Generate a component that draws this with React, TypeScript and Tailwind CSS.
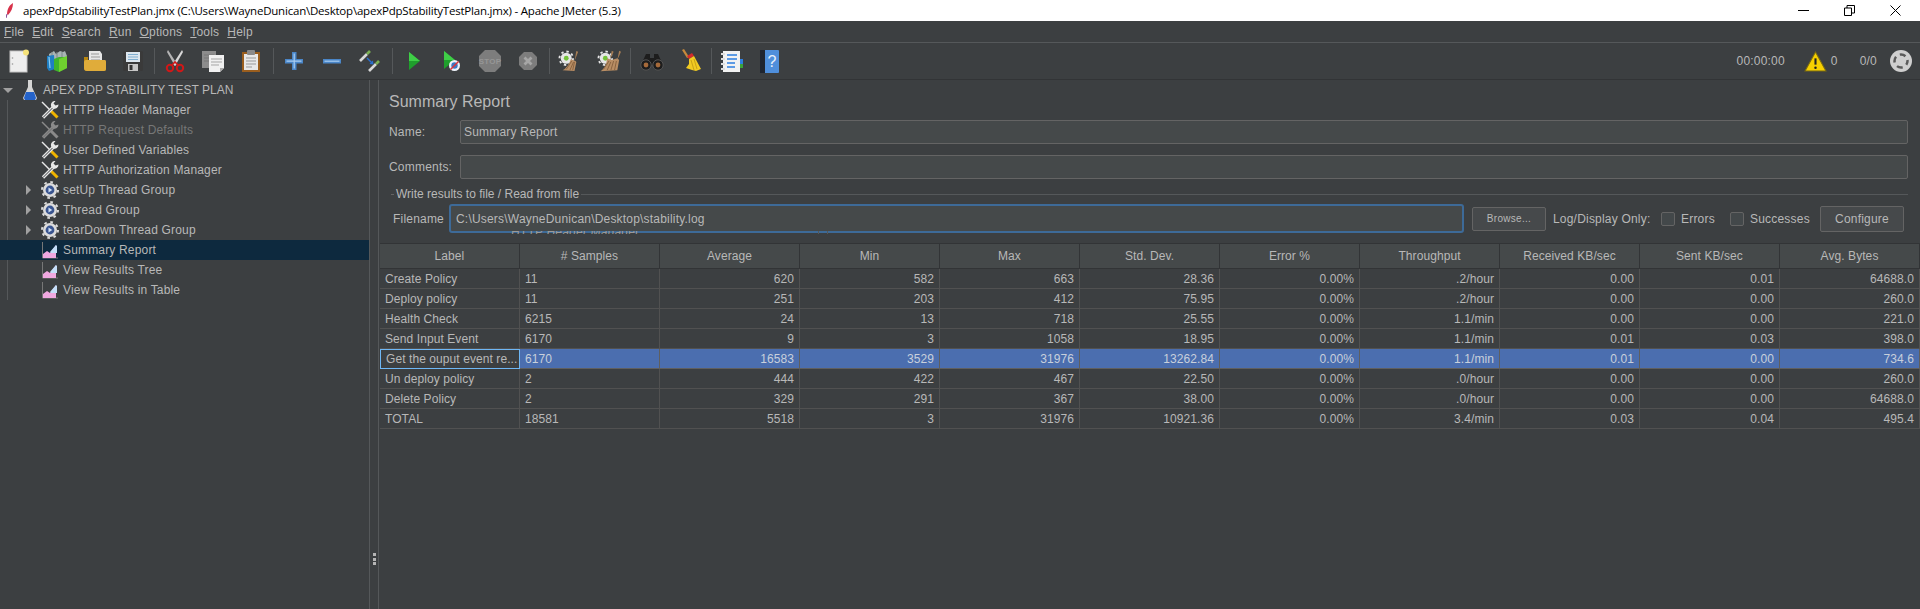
import React from 'react'

type IconProps = { className?: string }

/* toolbar icons, all drawn on a 24x24 box */
const NewIcon = () => (
  <svg width="24" height="24" viewBox="0 0 24 24">
    <rect x="3" y="2" width="17" height="21" fill="#eeeeee" stroke="#c4c4c4" />
    <circle cx="5.5" cy="9" r="0.8" fill="#999" />
    <circle cx="5.5" cy="15" r="0.8" fill="#999" />
    <circle cx="19" cy="3.5" r="3" fill="#f5e27a" />
  </svg>
)
const TemplatesIcon = () => (
  <svg width="24" height="24" viewBox="0 0 24 24">
    <path d="M4 5l5-3 2 3 4-3 3 1 2-1 2 5v6H4z" fill="#a9b4b5" />
    <path d="M7 3v6M12 3v6M17 3v6" stroke="#7a8788" />
    <path d="M2 7l7-1 1 14-6 2-2-3z" fill="#1f7fc4" />
    <path d="M4 8l1 11" stroke="#8fd0f5" strokeWidth="1.2" />
    <path d="M9 10l5-2 8 0v11l-8 4-5-2z" fill="#3eb52c" />
    <path d="M14 10l8-3v12l-8 4z" fill="#6fd12f" />
  </svg>
)
const OpenIcon = () => (
  <svg width="24" height="24" viewBox="0 0 24 24">
    <path d="M6 2h11l2 3v8H6z" fill="#e6e6e6" />
    <path d="M8 5h8M8 8h9M8 11h9" stroke="#999" />
    <path d="M1 8h4v4h18v8a2 2 0 0 1-2 2H4a3 3 0 0 1-3-3z" fill="#b8860f" />
    <path d="M1 13q0-2 2-2h19q1 0 1 2v7a2 2 0 0 1-2 2H4a3 3 0 0 1-3-3z" fill="#e0ac3a" />
  </svg>
)
const SaveIcon = () => (
  <svg width="24" height="24" viewBox="0 0 24 24">
    <rect x="2" y="2" width="20" height="20" rx="1.5" fill="#3a3a3a" />
    <rect x="5" y="3" width="14" height="10" fill="#dce6ee" />
    <path d="M7 5.5h10M7 8h10M7 10.5h10" stroke="#7faed0" />
    <rect x="7" y="15" width="10" height="7" fill="#c7c7c7" />
    <rect x="8.5" y="16" width="3" height="5" fill="#333" />
  </svg>
)
const CutIcon = () => (
  <svg width="24" height="24" viewBox="0 0 24 24">
    <path d="M5 1l9 14-2 2L4 3z" fill="#b5b5b5" />
    <path d="M19 1l-9 14 2 2 8-14z" fill="#d8d8d8" />
    <circle cx="7" cy="19" r="3.2" fill="none" stroke="#d01818" strokeWidth="2" />
    <circle cx="17" cy="19" r="3.2" fill="none" stroke="#d01818" strokeWidth="2" />
    <path d="M9 16l3-3 3 3" fill="none" stroke="#d01818" strokeWidth="1.6" />
  </svg>
)
const CopyIcon = () => (
  <svg width="24" height="24" viewBox="0 0 24 24">
    <rect x="1" y="2" width="14" height="17" fill="#8c8c8c" />
    <path d="M3 6h10M3 9h10M3 12h10" stroke="#777" />
    <path d="M8 6h15v13l-4 4H8z" fill="#f0f0f0" />
    <path d="M19 23v-4h4z" fill="#aaa" />
    <path d="M10 10h11M10 13h11M10 16h8" stroke="#a5a5a5" />
  </svg>
)
const PasteIcon = () => (
  <svg width="24" height="24" viewBox="0 0 24 24">
    <rect x="3" y="3" width="18" height="20" fill="#9a5e1e" />
    <rect x="5" y="5" width="14" height="16" fill="#e8e8e8" />
    <rect x="8" y="1" width="8" height="5" rx="1" fill="#8a8a8a" />
    <path d="M7 9h10M7 12h10M7 15h10M7 18h6" stroke="#999" />
  </svg>
)
const PlusIcon = () => (
  <svg width="24" height="24" viewBox="0 0 24 24">
    <rect x="10" y="3" width="4.5" height="18" fill="#4a86c8" />
    <rect x="3" y="10" width="18" height="4.5" fill="#4a86c8" />
    <path d="M12.200 4.500v15M4.500 12.200h15" stroke="#a9cdf0" strokeWidth="1.2" />
  </svg>
)
const MinusIcon = () => (
  <svg width="24" height="24" viewBox="0 0 24 24">
    <rect x="3" y="10" width="18" height="4.5" fill="#4a86c8" />
    <path d="M4.500 12.200h15" stroke="#a9cdf0" strokeWidth="1.2" />
  </svg>
)
const ToggleIcon = () => (
  <svg width="24" height="24" viewBox="0 0 24 24">
    <path d="M2 12l7-7" stroke="#d8d8d8" strokeWidth="2.6" />
    <path d="M9 5l3-3" stroke="#7bb054" strokeWidth="2.6" />
    <path d="M11 22l7-7" stroke="#d8d8d8" strokeWidth="2.6" />
    <path d="M18 15l3-3" stroke="#7bb054" strokeWidth="2.6" />
    <path d="M9 9l5 5" stroke="#2a6fd0" strokeWidth="1.4" />
    <path d="M15.500 15.500l-4-.6 3.400-3.400z" fill="#2a6fd0" />
  </svg>
)
const StartIcon = () => (
  <svg width="24" height="24" viewBox="0 0 24 24">
    <path d="M7 3l11 9-11 9z" fill="#1f9e2c" />
    <path d="M7 3l11 9H7z" fill="#3fce47" />
  </svg>
)
const StartNoPauseIcon = () => (
  <svg width="24" height="24" viewBox="0 0 24 24">
    <path d="M4 2l11 9-11 9z" fill="#1f9e2c" />
    <path d="M4 2l11 9H4z" fill="#3fce47" />
    <circle cx="14.500" cy="16.500" r="5.500" fill="#eef3fa" />
    <circle cx="14.500" cy="16.500" r="3.200" fill="#3b78c4" />
    <path d="M10.500 20.500l8-8" stroke="#d8353b" strokeWidth="1.6" />
  </svg>
)
const StopIcon = () => (
  <svg width="24" height="24" viewBox="0 0 24 24">
    <path d="M7 1h10l6 6v10l-6 6H7l-6-6V7z" fill="#7d7d7d" />
    <text x="12" y="15" textAnchor="middle" fontSize="8" fontWeight="700" fill="#969696" fontFamily="Liberation Sans, sans-serif">STOP</text>
  </svg>
)
const ShutdownIcon = () => (
  <svg width="24" height="24" viewBox="0 0 24 24">
    <path d="M8 3h8l5 5v8l-5 5H8l-5-5V8z" fill="#7d7d7d" />
    <path d="M8.500 8.500l7 7M15.500 8.500l-7 7" stroke="#a6a6a6" strokeWidth="2.8" />
  </svg>
)
const Gear = ({ center = '#74c23a' }: { center?: string }) => (
  <g>
    <circle cx="9" cy="9" r="6" fill="#e6e6e6" />
    <circle cx="9" cy="9" r="7.400" fill="none" stroke="#e6e6e6" strokeWidth="2" strokeDasharray="2.6 3.2" />
    <circle cx="9" cy="9" r="2.600" fill={center} />
  </g>
)
const ClearIcon = () => (
  <svg width="22" height="24" viewBox="0 0 24 24">
    <Gear />
    <path d="M20 1l2 1-4 10z" fill="#a77e55" />
    <path d="M14 10l5 2 1 1-2 10-13-1q6-3 9-12z" fill="#b88d64" />
    <path d="M9 21l6-9M13 22l4-9M16 22l2-9" stroke="#85603d" />
  </svg>
)
const ClearAllIcon = () => (
  <svg className="ml-[3px]" width="24" height="24" viewBox="0 0 26 24">
    <Gear />
    <path d="M16 1l2 1-4 9zM24 1l2 1-4 9z" fill="#a77e55" />
    <path d="M11 9l5 2 6-2 2 2-2 11-18 1q6-4 7-14z" fill="#b88d64" />
    <path d="M7 21l6-9M11 22l4-9M15 22l3-10M19 22l2-10" stroke="#85603d" />
  </svg>
)
const SearchIcon = () => (
  <svg width="24" height="24" viewBox="0 0 24 24">
    <path d="M6 5h4v4h4V5h4l5 11H1z" fill="#1d1d1d" />
    <circle cx="6" cy="16" r="5.200" fill="#1d1d1d" stroke="#555" />
    <circle cx="18" cy="16" r="5.200" fill="#1d1d1d" stroke="#555" />
    <circle cx="6" cy="16" r="2.400" fill="#a66a3a" />
    <circle cx="18" cy="16" r="2.400" fill="#a66a3a" />
  </svg>
)
const BroomIcon = () => (
  <svg width="24" height="24" viewBox="0 0 24 24">
    <path d="M4 1l2-1 5 8-2 1z" fill="#c68a3c" />
    <path d="M9 7l5-3 2 3-5 3z" fill="#d32b2b" />
    <path d="M11 10l5-3 7 13-5 2-4-1-6-2 3-4z" fill="#f1cb22" />
    <path d="M13 11l3 10M16 10l3 10" stroke="#c8a216" />
  </svg>
)
const LogIcon = () => (
  <svg width="24" height="24" viewBox="0 0 24 24">
    <rect x="3" y="2" width="17" height="21" fill="#f2f2f2" />
    <path d="M7 6h10M7 10h10M7 14h8M7 18h8" stroke="#2e7fe0" strokeWidth="1.4" />
    <path d="M1 5h4M1 10h4M1 15h4M1 20h4" stroke="#dddddd" strokeWidth="2" />
    <rect x="20" y="10" width="3" height="5" fill="#2e7fe0" />
    <rect x="20" y="15" width="3" height="4" fill="#3aa23a" />
  </svg>
)
const HelpIcon = () => (
  <svg width="24" height="24" viewBox="0 0 24 24">
    <rect x="3" y="1" width="18" height="23" rx="1" fill="#4f8fdc" />
    <rect x="2" y="1" width="5" height="23" fill="#1f2530" />
    <text x="14" y="18" textAnchor="middle" fontSize="16" fill="#e8f1fb" fontFamily="Liberation Sans, sans-serif">?</text>
  </svg>
)

/* tree icons */
const ToolIcon = ({ disabled = false }: { disabled?: boolean }) => {
  const metal = disabled ? '#8a8a8a' : '#e8e8e8'
  return (
    <svg width="18" height="18" viewBox="0 0 18 18">
      <path d="M1 1l8 8" stroke={metal} strokeWidth="1.4" />
      <path d="M9 9l7.500 7.500" stroke={disabled ? '#8a8a8a' : '#f0b400'} strokeWidth="3" />
      <path d="M2 16.500L13 5.500" stroke={metal} strokeWidth="3.200" />
      <path d="M2 16.500L13 5.500" stroke={disabled ? '#6e6e6e' : '#3c3f41'} strokeWidth="1" />
      <path d="M17.500 3.500a4 4 0 0 1-5.500 4L10.500 6a4 4 0 0 1 4-6l-2 2.500 2 2z" fill={metal} />
    </svg>
  )
}
const ThreadIcon = () => (
  <svg width="18" height="18" viewBox="0 0 18 18">
    <circle cx="9" cy="9" r="7" fill="#dcdcdc" />
    <circle cx="9" cy="9" r="8" fill="none" stroke="#dcdcdc" strokeWidth="2" strokeDasharray="2.6 3.7" />
    <circle cx="9" cy="9" r="4.400" fill="#3a5590" />
    <path d="M7.500 6.400l3.800 2.600-3.800 2.600z" fill="#cfe0f5" />
  </svg>
)
const ListenerIcon = () => (
  <svg width="18" height="18" viewBox="0 0 18 18">
    <path d="M1.500 1v16M1.500 17H17" stroke="#777" />
    <path d="M2 17v-4l4-3 3 2 6-8v13z" fill="#f0a8e0" />
    <path d="M9 11l6-7 1 1v7H10z" fill="#c4def8" />
  </svg>
)
const FlaskIcon = () => (
  <svg width="14" height="20" viewBox="0 0 14 20">
    <path d="M5 0h4v7l5 11-1 2H1l-1-2 5-11z" fill="#d5d5d5" />
    <path d="M3 12h8l2 6-1 2H2l-1-2z" fill="#2563c9" />
  </svg>
)

const ChevronDown = () => <span className="w-0 h-0 border-l-[5px] border-r-[5px] border-t-[5px] border-l-transparent border-r-transparent border-t-[#a0a0a0]" />
const ChevronRight = () => <span className="w-0 h-0 border-t-[5px] border-b-[5px] border-l-[5px] border-t-transparent border-b-transparent border-l-[#a0a0a0]" />

const Sep = ({ className = '' }: IconProps) => <span className={`w-px h-[26px] bg-[#55585a] ${className}`} />

const ToolBtn = ({ children }: { children: React.ReactNode }) => (
  <span className="w-[38px] h-full flex items-center justify-center">{children}</span>
)

const menus = [
  ['F', 'ile'],
  ['E', 'dit'],
  ['S', 'earch'],
  ['R', 'un'],
  ['O', 'ptions'],
  ['T', 'ools'],
  ['H', 'elp'],
]

const treeItems: { label: string; kind: 'tool' | 'off' | 'thread' | 'listener'; selected?: boolean }[] = [
  { label: 'HTTP Header Manager', kind: 'tool' },
  { label: 'HTTP Request Defaults', kind: 'off' },
  { label: 'User Defined Variables', kind: 'tool' },
  { label: 'HTTP Authorization Manager', kind: 'tool' },
  { label: 'setUp Thread Group', kind: 'thread' },
  { label: 'Thread Group', kind: 'thread' },
  { label: 'tearDown Thread Group', kind: 'thread' },
  { label: 'Summary Report', kind: 'listener', selected: true },
  { label: 'View Results Tree', kind: 'listener' },
  { label: 'View Results in Table', kind: 'listener' },
]

const columns = ['Label', '# Samples', 'Average', 'Min', 'Max', 'Std. Dev.', 'Error %', 'Throughput', 'Received KB/sec', 'Sent KB/sec', 'Avg. Bytes']

const rows = [
  ['Create Policy', '11', '620', '582', '663', '28.36', '0.00%', '.2/hour', '0.00', '0.01', '64688.0'],
  ['Deploy policy', '11', '251', '203', '412', '75.95', '0.00%', '.2/hour', '0.00', '0.00', '260.0'],
  ['Health Check', '6215', '24', '13', '718', '25.55', '0.00%', '1.1/min', '0.00', '0.00', '221.0'],
  ['Send Input Event', '6170', '9', '3', '1058', '18.95', '0.00%', '1.1/min', '0.01', '0.03', '398.0'],
  ['Get the ouput event re...', '6170', '16583', '3529', '31976', '13262.84', '0.00%', '1.1/min', '0.01', '0.00', '734.6'],
  ['Un deploy policy', '2', '444', '422', '467', '22.50', '0.00%', '.0/hour', '0.00', '0.00', '260.0'],
  ['Delete Policy', '2', '329', '291', '367', '38.00', '0.00%', '.0/hour', '0.00', '0.00', '64688.0'],
  ['TOTAL', '18581', '5518', '3', '31976', '10921.36', '0.00%', '3.4/min', '0.03', '0.04', '495.4'],
]

const App = () => {
  return (
    <div className="w-[1920px] h-[609px] overflow-hidden flex flex-col bg-[#3c3f41] text-[#b8b8b8] text-[12px] tracking-[0.2px] font-['Liberation_Sans',sans-serif]">
      {/* Title bar */}
      <div className="h-[21px] bg-white flex items-center text-black shrink-0">
        <svg className="ml-[6px]" width="8" height="15" viewBox="0 0 8 15">
          <path d="M7 0C3 2 1 7 1 11l1 1C5 9 7 5 7 0z" fill="#d8324a" />
          <path d="M1 11L0 15" stroke="#7a3f8f" />
        </svg>
        <span className="ml-[9px] text-[11.5px] tracking-[-0.21px] font-['Open_Sans',sans-serif]">
          apexPdpStabilityTestPlan.jmx (C:\Users\WayneDunican\Desktop\apexPdpStabilityTestPlan.jmx) - Apache JMeter (5.3)
        </span>
        <div className="ml-auto flex items-center">
          <svg className="mr-[35px]" width="11" height="11" viewBox="0 0 11 11"><path d="M0 5.500h11" stroke="#000" /></svg>
          <svg className="mr-[35px]" width="11" height="11" viewBox="0 0 11 11"><path d="M.5 3h7v7.500h-7zM3 3V.5h7.500V8H7.500" fill="none" stroke="#000" /></svg>
          <svg className="mr-[19px]" width="11" height="11" viewBox="0 0 11 11"><path d="M.5.5l10 10M10.500.5l-10 10" stroke="#000" /></svg>
        </div>
      </div>

      {/* Menu bar */}
      <div className="h-[22px] shrink-0 flex items-center pl-[4px] gap-[8px] border-b border-[#55585a]">
        {menus.map(([key, rest]) => (
          <span key={key}>
            <span className="underline">{key}</span>
            {rest}
          </span>
        ))}
      </div>

      {/* Toolbar */}
      <div className="h-[37px] shrink-0 flex items-center border-b border-[#323436]">
        <ToolBtn><NewIcon /></ToolBtn>
        <ToolBtn><TemplatesIcon /></ToolBtn>
        <ToolBtn><OpenIcon /></ToolBtn>
        <ToolBtn><SaveIcon /></ToolBtn>
        <Sep className="ml-[2px] mr-px" />
        <ToolBtn><CutIcon /></ToolBtn>
        <ToolBtn><CopyIcon /></ToolBtn>
        <ToolBtn><PasteIcon /></ToolBtn>
        <Sep className="ml-[3px] mr-px" />
        <ToolBtn><PlusIcon /></ToolBtn>
        <ToolBtn><MinusIcon /></ToolBtn>
        <ToolBtn><ToggleIcon /></ToolBtn>
        <Sep className="ml-[3px] mr-[2px]" />
        <ToolBtn><StartIcon /></ToolBtn>
        <ToolBtn><StartNoPauseIcon /></ToolBtn>
        <ToolBtn><StopIcon /></ToolBtn>
        <ToolBtn><ShutdownIcon /></ToolBtn>
        <Sep className="ml-[2px]" />
        <ToolBtn><ClearIcon /></ToolBtn>
        <ToolBtn><ClearAllIcon /></ToolBtn>
        <Sep className="ml-[4px] mr-[2px]" />
        <ToolBtn><SearchIcon /></ToolBtn>
        <ToolBtn><BroomIcon /></ToolBtn>
        <Sep className="ml-[2px] mr-px" />
        <ToolBtn><LogIcon /></ToolBtn>
        <ToolBtn><HelpIcon /></ToolBtn>
        <div className="ml-auto flex items-center pr-[8px]">
          <span>00:00:00</span>
          <svg className="ml-[19px]" width="23" height="21" viewBox="0 0 22 20">
            <path d="M11 1l10 18H1z" fill="#f7d000" stroke="#7a6a10" />
            <path d="M11 7v6" stroke="#222" strokeWidth="2" />
            <circle cx="11" cy="16" r="1.200" fill="#222" />
          </svg>
          <span className="ml-[4px]">0</span>
          <span className="ml-[22px]">0/0</span>
          <svg className="ml-[13px]" width="22" height="22" viewBox="0 0 22 22">
            <circle cx="11" cy="11" r="11" fill="#cfcfcf" />
            <circle cx="11" cy="11" r="6.500" fill="none" stroke="#5a5a5a" strokeWidth="2.500" strokeDasharray="6 4.200" strokeDashoffset="2" />
          </svg>
        </div>
      </div>

      <div className="flex-1 flex min-h-0">
        {/* Test plan tree */}
        <div className="relative w-[369px] shrink-0 tracking-[0.17px]">
          <span className="absolute left-[7px] top-[20px] h-[200px] w-px bg-[#55585a]" />
          <div className="h-5 flex items-center relative">
            <span className="absolute left-[3px] top-[8px] flex"><ChevronDown /></span>
            <span className="ml-[23px] flex"><FlaskIcon /></span>
            <span className="ml-[6px] tracking-normal">APEX PDP STABILITY TEST PLAN</span>
          </div>
          {treeItems.map(item => (
            <div key={item.label} className={`h-5 flex items-center relative pl-[41px] ${item.selected ? 'bg-[#0d293e]' : ''}`}>
              {item.kind === 'thread' && <span className="absolute left-[26px] top-[5px] flex"><ChevronRight /></span>}
              <span className="flex">
                {item.kind === 'tool' && <ToolIcon />}
                {item.kind === 'off' && <ToolIcon disabled />}
                {item.kind === 'thread' && <ThreadIcon />}
                {item.kind === 'listener' && <ListenerIcon />}
              </span>
              <span className={`ml-[4px] ${item.kind === 'off' ? 'text-[#777777]' : ''}`}>{item.label}</span>
            </div>
          ))}
        </div>

        {/* Splitter */}
        <div className="w-[10px] shrink-0 border-l border-r border-[#55585a] flex flex-col items-center justify-end gap-[1.5px] pb-[44px]">
          <span className="w-[3px] h-[3px] bg-[#b5b5b5]" />
          <span className="w-[3px] h-[3px] bg-[#b5b5b5]" />
          <span className="w-[3px] h-[3px] bg-[#b5b5b5]" />
        </div>

        {/* Summary report panel */}
        <div className="flex-1 min-w-0 flex flex-col">
          <div className="pl-[10px] pr-[12px]">
            <div className="h-[40px] flex items-center text-[16px] tracking-normal pt-[3px]">Summary Report</div>
            <div className="flex items-center h-[24px]">
              <span className="w-[71px] shrink-0">Name:</span>
              <div className="flex-1 h-full rounded-[2px] border border-[#646464] bg-[#45494a] pl-[3px] flex items-center">Summary Report</div>
            </div>
            <div className="flex items-center h-[24px] mt-[11px]">
              <span className="w-[71px] shrink-0">Comments:</span>
              <div className="flex-1 h-full rounded-[2px] border border-[#646464] bg-[#45494a]" />
            </div>
            <div className="flex items-center h-[16px] mt-[7px] pl-[2px]">
              <span className="w-[3px] h-px bg-[#646464]" />
              <span className="px-[2px] tracking-normal">Write results to file / Read from file</span>
              <span className="flex-1 h-px bg-[#55585a]" />
            </div>
          </div>
          <div className="flex items-center h-[29px] mt-[2px] pl-[14px]">
            <span className="w-[56px] shrink-0">Filename</span>
            <div className="relative w-[1015px] h-full rounded-[3px] border-2 border-[#3d6a98] bg-[#45494a] flex items-center pl-[5px]">
              C:\Users\WayneDunican\Desktop\stability.log
              {/* repaint leftovers from the tree, peeking out under the focused field */}
              <div className="absolute top-full left-[45px] h-[3px] w-[150px] overflow-hidden flex items-start leading-[12px] text-[#9a9a9a]">
                <span className="-mt-[5px] ml-[15px] whitespace-nowrap">HTTP Header Manager</span>
              </div>
              <span className="absolute top-full left-[367px] w-px h-[3px] bg-[#55585a]" />
              <span className="absolute top-full left-[376px] w-px h-[3px] bg-[#55585a]" />
            </div>
            <div className="ml-[8px] w-[74px] h-[24px] shrink-0 rounded-[2px] border border-[#646464] bg-[#46494b] flex items-center justify-center text-[10px] tracking-[0.3px]">Browse...</div>
            <span className="ml-[7px] w-[108px] shrink-0">Log/Display Only:</span>
            <span className="w-[14px] h-[14px] shrink-0 rounded-[2px] border border-[#646464] bg-[#43484a]" />
            <span className="ml-[6px] w-[49px] shrink-0">Errors</span>
            <span className="w-[14px] h-[14px] shrink-0 rounded-[2px] border border-[#646464] bg-[#43484a]" />
            <span className="ml-[6px] w-[70px] shrink-0">Successes</span>
            <div className="w-[84px] h-[26px] shrink-0 rounded-[2px] border border-[#646464] bg-[#46494b] flex items-center justify-center">Configure</div>
          </div>

          {/* Results table */}
          <div className="mt-[10px] ml-px tracking-[0.08px]">
            <div className="grid grid-cols-[repeat(11,140px)] h-[26px]">
              {columns.map(col => (
                <div key={col} className="bg-[#45494a] border-t border-r border-b border-[#323436] flex items-center justify-center">{col}</div>
              ))}
            </div>
            <div className="grid grid-cols-[repeat(11,140px)] auto-rows-[20px]">
              {rows.map((row, r) =>
                row.map((cell, c) => {
                  const selected = r === 4
                  const focused = selected && c === 0
                  return (
                    <div
                      key={`${r}-${c}`}
                      className={`flex items-center px-[5px] whitespace-nowrap ${c < 2 ? 'justify-start' : 'justify-end'} ${
                        focused
                          ? 'border border-[#6fb7f5]'
                          : selected
                            ? 'bg-[#4b6eaf] border-r border-b border-[#5f5f5f] text-[#c8d0dc]'
                            : 'border-r border-b border-[#515151]'
                      }`}
                    >
                      {cell}
                    </div>
                  )
                }),
              )}
            </div>
          </div>
        </div>
      </div>
    </div>
  )
}

export default App
